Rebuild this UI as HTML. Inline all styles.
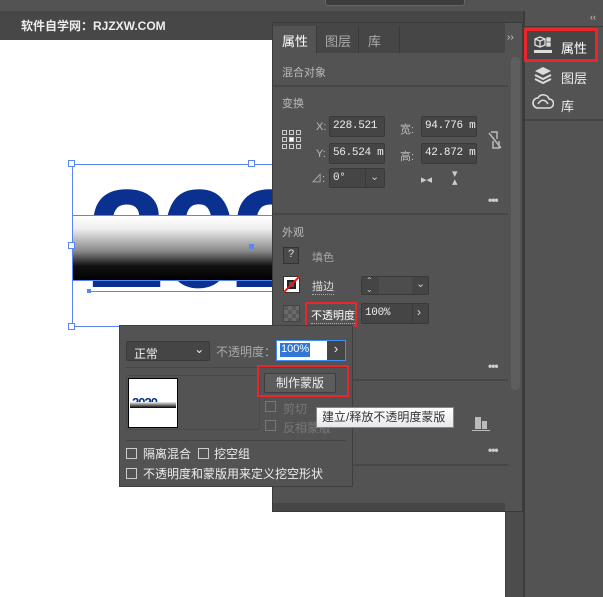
<!DOCTYPE html>
<html><head><meta charset="utf-8"><style>
*{box-sizing:border-box;margin:0;padding:0}
body{width:603px;height:597px;overflow:hidden;background:#fff;position:relative;font-family:"Liberation Sans","Noto Sans CJK SC",sans-serif;font-size:11px;color:#ddd}
.a{position:absolute}
.fld{position:absolute;background:#454545;border:1px solid #3a3a3a;border-radius:2px;color:#eee;font-family:"Liberation Mono","Noto Sans CJK SC",monospace;font-size:11px;padding:3px 0 0 3px;white-space:nowrap;overflow:hidden;letter-spacing:-0.3px}
.lbl{position:absolute;color:#bbb;font-size:11px;white-space:nowrap}
.sep{position:absolute;height:2px;background:#474747}
.cb{position:absolute;width:11px;height:11px;border:1px solid #ccc}
.dots{position:absolute;color:#ccc;font-size:12px;letter-spacing:-1px;font-weight:bold}
</style></head><body>
<!-- top bars -->
<div class="a" style="left:0;top:0;width:603px;height:11px;background:#535353"></div>
<div class="a" style="left:325px;top:-4px;width:140px;height:10px;background:#3c3c3c;border:1px solid #666;border-radius:3px"></div>
<div class="a" style="left:0;top:11px;width:272px;height:29px;background:#474747"></div>
<div class="a" style="left:21px;top:17px;font-size:12px;color:#eee;font-weight:bold">软件自学网：RJZXW.COM</div>
<div class="a" style="left:272px;top:11px;width:252px;height:11px;background:#474747"></div>
<!-- canvas art -->
<div class="a" style="left:72px;top:164px;width:210px;height:163px;border:1px solid #5a86f5"></div>
<div class="a" style="left:88px;top:169px;width:200px;height:123px;overflow:hidden">
<div style="font-size:140px;font-weight:bold;color:#0a318f;letter-spacing:-6px;line-height:140px;font-family:'Liberation Sans',sans-serif;white-space:nowrap">2020</div></div>
<div class="a" style="left:73px;top:215px;width:200px;height:66px;background:linear-gradient(#fff 0%,#eee 20%,#888 55%,#111 78%,#000 100%);border-top:1px solid #5a86f5;border-bottom:1px solid #5a86f5"></div>
<div class="a" style="left:90px;top:291px;width:190px;height:1px;background:#5a86f5"></div>
<div class="a" style="left:68px;top:160px;width:7px;height:7px;background:#fff;border:1px solid #5a86f5"></div>
<div class="a" style="left:248px;top:160px;width:7px;height:7px;background:#fff;border:1px solid #5a86f5"></div>
<div class="a" style="left:68px;top:242px;width:7px;height:7px;background:#fff;border:1px solid #5a86f5"></div>
<div class="a" style="left:68px;top:323px;width:7px;height:7px;background:#fff;border:1px solid #5a86f5"></div>
<div class="a" style="left:249px;top:244px;width:5px;height:5px;background:#5a86f5"></div>
<div class="a" style="left:87px;top:289px;width:4px;height:4px;background:#5a86f5"></div>
<!-- right strips -->
<div class="a" style="left:505px;top:22px;width:18px;height:575px;background:#4c4c4c;border-left:1px solid #3e3e3e"></div>
<div class="a" style="left:523px;top:11px;width:80px;height:586px;background:#535353;border-left:2px solid #3c3c3c"></div>
<div class="a" style="left:590px;top:12px;color:#ccc;font-size:9px">‹‹</div>
<div class="a" style="left:525px;top:26px;width:78px;height:1px;background:#3c3c3c"></div>
<div class="a" style="left:525px;top:119px;width:78px;height:2px;background:#444"></div>
<div class="a" style="left:524px;top:28px;width:74px;height:34px;border:3px solid #e8262b;background:#464646"></div>
<svg class="a" style="left:532px;top:36px" width="22" height="20" viewBox="0 0 22 20" fill="none" stroke="#ddd" stroke-width="1.3"><path d="M3 3l5-2 5 2v6l-5 2-5-2z M3 3l5 2 5-2 M8 5v6"/><rect x="15" y="2" width="3" height="3" fill="#ddd"/><rect x="15" y="7" width="3" height="3" fill="#ddd"/><rect x="2" y="14" width="18" height="3" fill="#ddd" stroke="none"/></svg>
<div class="a" style="left:561px;top:38px;font-size:13px;color:#fff">属性</div>
<svg class="a" style="left:533px;top:66px" width="20" height="18" viewBox="0 0 20 18"><path d="M10 1l8 4-8 4-8-4z" fill="#ddd"/><path d="M2 9l8 4 8-4M2 13l8 4 8-4" stroke="#ddd" stroke-width="2" fill="none"/></svg>
<div class="a" style="left:561px;top:68px;font-size:13px;color:#eee">图层</div>
<svg class="a" style="left:532px;top:94px" width="22" height="16" viewBox="0 0 22 16" fill="none" stroke="#ddd" stroke-width="1.6"><path d="M6 14a5 5 0 010-10 6 6 0 0111 1 4 4 0 010 9z"/><path d="M6 10c3-5 7-5 10 0" /></svg>
<div class="a" style="left:561px;top:96px;font-size:13px;color:#eee">库</div>
<!-- main panel -->
<div class="a" style="left:272px;top:22px;width:251px;height:490px;background:#535353;border:1px solid #3a3a3a"></div>
<div class="a" style="left:273px;top:23px;width:232px;height:30px;background:#464646"></div>
<div class="a" style="left:273px;top:26px;width:43px;height:27px;background:#535353"></div>
<div class="a" style="left:282px;top:31px;font-size:13px;color:#fff">属性</div>
<div class="a" style="left:325px;top:31px;font-size:13px;color:#aaa">图层</div>
<div class="a" style="left:316px;top:26px;width:1px;height:27px;background:#3a3a3a"></div>
<div class="a" style="left:358px;top:26px;width:1px;height:27px;background:#3a3a3a"></div>
<div class="a" style="left:399px;top:26px;width:1px;height:27px;background:#3a3a3a"></div>
<div class="a" style="left:368px;top:31px;font-size:13px;color:#aaa">库</div>
<div class="a" style="left:507px;top:32px;font-size:10px;color:#ccc">››</div>
<div class="a" style="left:511px;top:57px;width:9px;height:333px;background:#5e5e5e;border-radius:4px"></div>
<div class="lbl" style="left:282px;top:64px">混合对象</div>
<div class="sep" style="left:273px;top:85px;width:235px"></div>
<div class="lbl" style="left:282px;top:95px">变换</div>
<svg class="a" style="left:282px;top:130px" width="19" height="19" viewBox="0 0 19 19" fill="none" stroke="#ccc"><rect x=".5" y=".5" width="4" height="4"/><rect x="7.5" y=".5" width="4" height="4"/><rect x="14.5" y=".5" width="4" height="4"/><rect x=".5" y="7.5" width="4" height="4"/><rect x="7.5" y="7.5" width="4" height="4" fill="#fff"/><rect x="14.5" y="7.5" width="4" height="4"/><rect x=".5" y="14.5" width="4" height="4"/><rect x="7.5" y="14.5" width="4" height="4"/><rect x="14.5" y="14.5" width="4" height="4"/></svg>
<div class="lbl" style="left:316px;top:121px">X:</div>
<div class="fld" style="left:329px;top:116px;width:56px;height:21px">228.521</div>
<div class="lbl" style="left:400px;top:121px">宽:</div>
<div class="fld" style="left:421px;top:116px;width:56px;height:21px">94.776 m</div>
<div class="lbl" style="left:316px;top:148px">Y:</div>
<div class="fld" style="left:329px;top:143px;width:56px;height:21px">56.524 m</div>
<div class="lbl" style="left:400px;top:148px">高:</div>
<div class="fld" style="left:421px;top:143px;width:56px;height:21px">42.872 m</div>
<svg class="a" style="left:487px;top:130px" width="16" height="20" viewBox="0 0 16 20" fill="none" stroke="#bbb" stroke-width="1.5"><path d="M4 2h6v7 M6 11v7h6v-7 M2 3l12 15"/></svg>
<div class="lbl" style="left:311px;top:170px">⊿:</div>
<div class="fld" style="left:329px;top:168px;width:56px;height:20px">0°</div>
<div class="a" style="left:365px;top:169px;width:1px;height:18px;background:#3a3a3a"></div>
<div class="a" style="left:370px;top:170px;color:#ccc">⌄</div>
<div class="a" style="left:421px;top:173px;color:#ccc;font-size:11px">▸◂</div>
<div class="a" style="left:452px;top:170px;color:#ccc;font-size:11px;line-height:8px">▾<br>▴</div>
<div class="dots" style="left:488px;top:193px">•••</div>
<div class="sep" style="left:273px;top:213px;width:235px"></div>
<div class="lbl" style="left:282px;top:224px">外观</div>
<div class="a" style="left:283px;top:247px;width:16px;height:17px;border:1px solid #333;background:#4a4a4a;color:#ddd;text-align:center;font-size:11px">?</div>
<div class="lbl" style="left:312px;top:249px;color:#aaa">填色</div>
<div class="a" style="left:283px;top:276px;width:17px;height:17px;background:#fff;border:1px solid #333"></div>
<div class="a" style="left:287px;top:280px;width:9px;height:9px;border:2px solid #222;background:#555"></div>
<svg class="a" style="left:283px;top:276px" width="17" height="17"><line x1="0" y1="17" x2="17" y2="0" stroke="#e01b1b" stroke-width="2"/></svg>
<div class="lbl" style="left:312px;top:278px;color:#ddd;border-bottom:1px dotted #aaa">描边</div>
<div class="fld" style="left:361px;top:276px;width:68px;height:19px"></div>
<div class="a" style="left:366px;top:276px;color:#ccc;font-size:8px;line-height:9px">⌃<br>⌄</div>
<div class="a" style="left:379px;top:277px;width:33px;height:17px;background:#4d4d4d"></div>
<div class="a" style="left:416px;top:277px;color:#ccc">⌄</div>
<div class="a" style="left:283px;top:305px;width:17px;height:17px;background:repeating-conic-gradient(#6a6a6a 0 25%,#585858 0 50%) 0 0/8px 8px;border:1px solid #444"></div>
<div class="a" style="left:305px;top:302px;width:52px;height:25px;border:2px solid #e8262b"></div>
<div class="lbl" style="left:311px;top:307px;color:#fff;border-bottom:1px dotted #aaa">不透明度</div>
<div class="fld" style="left:361px;top:303px;width:68px;height:21px">100%</div>
<div class="a" style="left:412px;top:304px;width:1px;height:19px;background:#3a3a3a"></div>
<div class="a" style="left:417px;top:305px;color:#ddd;font-size:12px">›</div>
<div class="a" style="left:335px;top:327px;color:#ccc;font-size:9px">☰</div>
<div class="dots" style="left:488px;top:359px">•••</div>
<div class="sep" style="left:273px;top:379px;width:235px"></div>
<div class="a" style="left:475px;top:417px;width:6px;height:12px;background:#bbb"></div>
<div class="a" style="left:482px;top:421px;width:5px;height:8px;background:#bbb"></div>
<div class="a" style="left:472px;top:430px;width:18px;height:1px;background:#bbb"></div>
<div class="dots" style="left:488px;top:443px">•••</div>
<div class="sep" style="left:273px;top:464px;width:235px"></div>
<div class="a" style="left:273px;top:503px;width:232px;height:8px;background:#464646"></div>
<!-- popup -->
<div class="a" style="left:119px;top:325px;width:234px;height:162px;background:#535353;border:1px solid #3f3f3f"></div>
<div class="fld" style="left:126px;top:341px;width:84px;height:20px;font-family:'Liberation Sans','Noto Sans CJK SC',sans-serif;font-size:12px;padding-left:7px">正常<span style="position:absolute;right:5px;top:0">⌄</span></div>
<div class="lbl" style="left:216px;top:343px;font-size:12px;color:#aaa">不透明度：</div>
<div class="a" style="left:276px;top:340px;width:70px;height:21px;border:1px solid #3f8ef0;background:#fff"></div>
<div class="a" style="left:280px;top:343px;background:#3276d6;color:#fff;font-size:11px;padding:0 1px;height:14px">100%</div>
<div class="a" style="left:327px;top:341px;width:18px;height:19px;background:#454545;color:#eee;text-align:center;font-size:13px">›</div>
<div class="sep" style="left:126px;top:367px;width:220px;height:1px"></div>
<div class="a" style="left:126px;top:375px;width:134px;height:55px;border:1px solid #4a4a4a;border-radius:2px"></div>
<div class="a" style="left:128px;top:378px;width:50px;height:50px;background:#fff;border:1px solid #000;overflow:hidden"></div>
<div class="a" style="left:132px;top:396px;font-size:13px;font-weight:bold;color:#0a318f;letter-spacing:-1px;line-height:1">2020</div>
<div class="a" style="left:130px;top:402px;width:46px;height:6px;background:linear-gradient(#eee,#000)"></div>
<div class="a" style="left:257px;top:365px;width:92px;height:32px;border:2px solid #e8262b"></div>
<div class="a" style="left:264px;top:373px;width:72px;height:20px;background:#5c5c5c;border:1px solid #3e3e3e;border-radius:2px;color:#eee;font-size:12px;text-align:center;line-height:18px">制作蒙版</div>
<div class="cb" style="left:265px;top:401px;border-color:#777"></div>
<div class="lbl" style="left:283px;top:400px;color:#777;font-size:12px">剪切</div>
<div class="cb" style="left:265px;top:420px;border-color:#777"></div>
<div class="lbl" style="left:283px;top:419px;color:#777;font-size:12px">反相蒙版</div>
<div class="sep" style="left:126px;top:440px;width:220px;height:1px;background:#444"></div>
<div class="cb" style="left:126px;top:448px"></div>
<div class="a" style="left:143px;top:445px;font-size:12px;color:#eee">隔离混合</div>
<div class="cb" style="left:198px;top:448px"></div>
<div class="a" style="left:214px;top:445px;font-size:12px;color:#eee">挖空组</div>
<div class="cb" style="left:126px;top:468px"></div>
<div class="a" style="left:143px;top:465px;font-size:12px;color:#eee">不透明度和蒙版用来定义挖空形状</div>
<!-- tooltip -->
<div class="a" style="left:316px;top:407px;width:138px;height:21px;background:linear-gradient(#fff,#e8e8ec);border:1px solid #888;color:#333;font-size:12px;line-height:19px;padding-left:5px;white-space:nowrap">建立/释放不透明度蒙版</div>
</body></html>
